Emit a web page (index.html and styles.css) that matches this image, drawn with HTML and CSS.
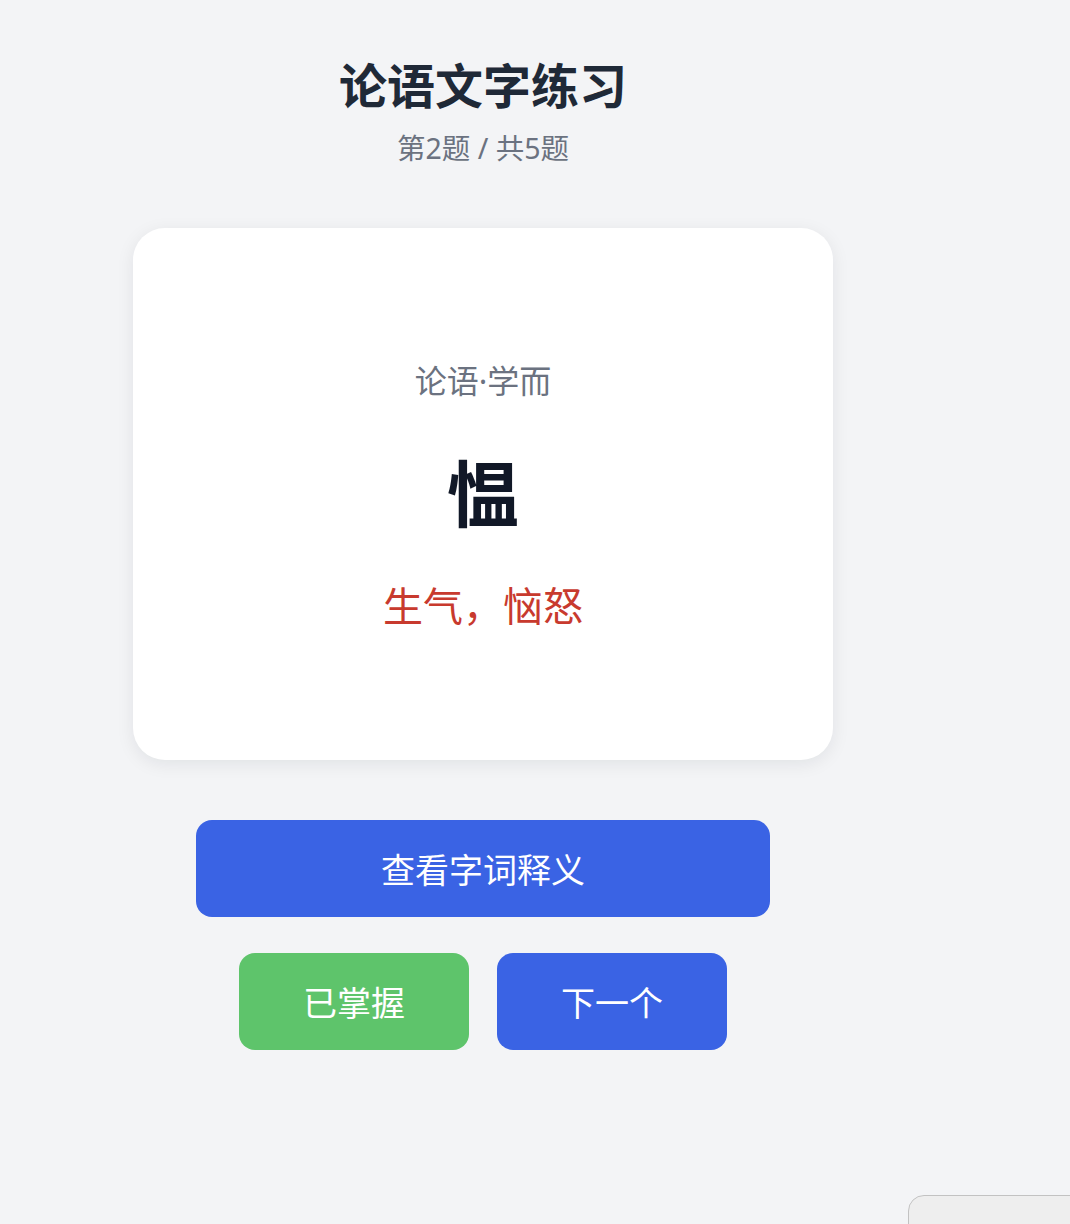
FILE: index.html
```html
<!DOCTYPE html>
<html lang="zh-CN">
<head>
<meta charset="utf-8">
<title>论语文字练习</title>
<link rel="stylesheet" href="styles.css">
</head>
<body>
<main class="app">
  <header class="header">
    <h1 class="title">论语文字练习</h1>
    <p class="progress">第2题 / 共5题</p>
  </header>
  <section class="card">
    <div class="source">论语·学而</div>
    <div class="char">愠</div>
    <div class="meaning">生气，恼怒</div>
  </section>
  <div class="actions">
    <button class="btn btn-primary btn-wide">查看字词释义</button>
    <div class="row">
      <button class="btn btn-success btn-half">已掌握</button>
      <button class="btn btn-primary btn-half">下一个</button>
    </div>
  </div>
</main>
<div class="corner-widget"></div>
</body>
</html>
```
FILE: styles.css
```css
html, body {
  margin: 0;
  padding: 0;
  background: #f3f4f6;
  font-family: "Noto Sans", "Noto Sans CJK SC", sans-serif;
  height: 100%;
  overflow: hidden;
}

.app {
  width: 700px;
  margin-left: 133px;
  display: flex;
  flex-direction: column;
  align-items: center;
}

.header {
  padding-top: 58px;
  text-align: center;
}

.title {
  margin: 0;
  font-size: 48px;
  line-height: 56px;
  font-weight: 700;
  color: #1f2937;
}

.progress {
  margin: 16px 0 0;
  font-size: 28.5px;
  line-height: 36px;
  color: #6b7280;
}

.card {
  margin-top: 62px;
  width: 700px;
  height: 532px;
  box-sizing: border-box;
  background: #ffffff;
  border-radius: 32px;
  box-shadow: 0 4px 18px rgba(17, 24, 39, 0.08);
  display: flex;
  flex-direction: column;
  align-items: center;
  justify-content: center;
  padding-top: 2px;
}

.source {
  font-size: 32px;
  line-height: 40px;
  color: #6b7280;
}

.char {
  margin-top: 52px;
  font-size: 72px;
  line-height: 80px;
  font-weight: 700;
  color: #111827;
}

.meaning {
  margin-top: 49px;
  font-size: 40px;
  line-height: 48px;
  color: #c83a2e;
}

.actions {
  margin-top: 60px;
  display: flex;
  flex-direction: column;
  align-items: center;
  gap: 36px;
}

.row {
  display: flex;
  gap: 28px;
}

.btn {
  border: none;
  height: 97px;
  border-radius: 16px;
  color: #ffffff;
  font-family: "Noto Sans", "Noto Sans CJK SC", sans-serif;
  font-size: 34px;
  padding: 0;
  cursor: pointer;
}

.btn-primary {
  background: #3a63e4;
}

.btn-success {
  background: #5ec46b;
}

.btn-wide {
  width: 574px;
}

.btn-half {
  width: 230px;
}

.corner-widget {
  position: fixed;
  left: 908px;
  top: 1195px;
  width: 220px;
  height: 80px;
  box-sizing: border-box;
  background: #eeeeee;
  border: 1.5px solid #c2c2c2;
  border-radius: 16px;
}
```
